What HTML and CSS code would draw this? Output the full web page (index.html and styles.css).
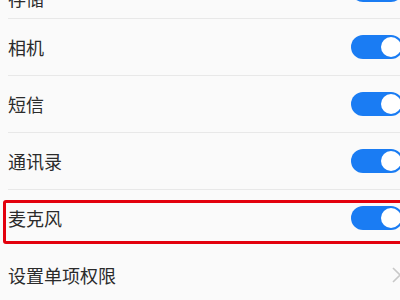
FILE: index.html
```html
<!DOCTYPE html>
<html lang="zh-CN">
<head>
    <meta charset="UTF-8">
    <meta name="viewport" content="width=device-width, initial-scale=1.0">
    <title>权限管理</title>
    <link rel="stylesheet" href="styles.css">
</head>
<body>
    <ul class="perm-list">
        <li class="perm-item">
            <span class="perm-name">存储</span>
            <span class="switch on"></span>
        </li>
        <li class="perm-item">
            <span class="perm-name">相机</span>
            <span class="switch on"></span>
        </li>
        <li class="perm-item">
            <span class="perm-name">短信</span>
            <span class="switch on"></span>
        </li>
        <li class="perm-item">
            <span class="perm-name">通讯录</span>
            <span class="switch on"></span>
        </li>
        <li class="perm-item marked">
            <span class="perm-name">麦克风</span>
            <span class="switch on"></span>
        </li>
        <li class="perm-item link">
            <span class="perm-name">设置单项权限</span>
            <svg class="chevron" width="9" height="16" viewBox="0 0 9 16">
                <path d="M1 1 L8 8 L1 15" fill="none" stroke="#c8c8c8" stroke-width="1.6"/>
            </svg>
        </li>
    </ul>
</body>
</html>
```

FILE: styles.css
```css
html, body {
    margin: 0;
    padding: 0;
    background-color: #fafafa;
    overflow: hidden;
}

body {
    font-family: "Noto Sans CJK SC", "Noto Sans", sans-serif;
    color: #2b2b2b;
}

/* 권한 목록 */
.perm-list {
    list-style: none;
    margin: -38px 0 0 8px;
    padding: 0;
}

.perm-item {
    position: relative;
    display: flex;
    align-items: center;
    justify-content: space-between;
    height: 56px;
    border-bottom: 1px solid #e8e8e8;
}

.perm-item.marked,
.perm-item.link {
    border-bottom-color: transparent;
}

.perm-name {
    font-size: 18px;
    line-height: 1;
}

/* 위쪽에 잘려 보이는 첫 행은 글자가 조금 아래에 있음 */
.perm-item:first-child .perm-name {
    margin-top: 16px;
}

/* 스위치 */
.switch {
    position: relative;
    width: 52px;
    height: 24px;
    margin-right: -3px;
    border-radius: 12px;
    background-color: #c9c9c9;
}

.switch.on {
    background-color: #1a7cf3;
}

.switch::after {
    content: "";
    position: absolute;
    top: 2px;
    left: 2px;
    width: 20px;
    height: 20px;
    border-radius: 50%;
    background-color: #fff;
}

.switch.on::after {
    left: 30px;
}

/* 빨간 강조 박스 */
.perm-item.marked::before {
    content: "";
    position: absolute;
    top: 10px;
    left: -5px;
    right: -10px;
    height: 38px;
    border: 3px solid #e3000d;
    border-radius: 3px;
}

.chevron {
    margin-right: -1px;
}
```
